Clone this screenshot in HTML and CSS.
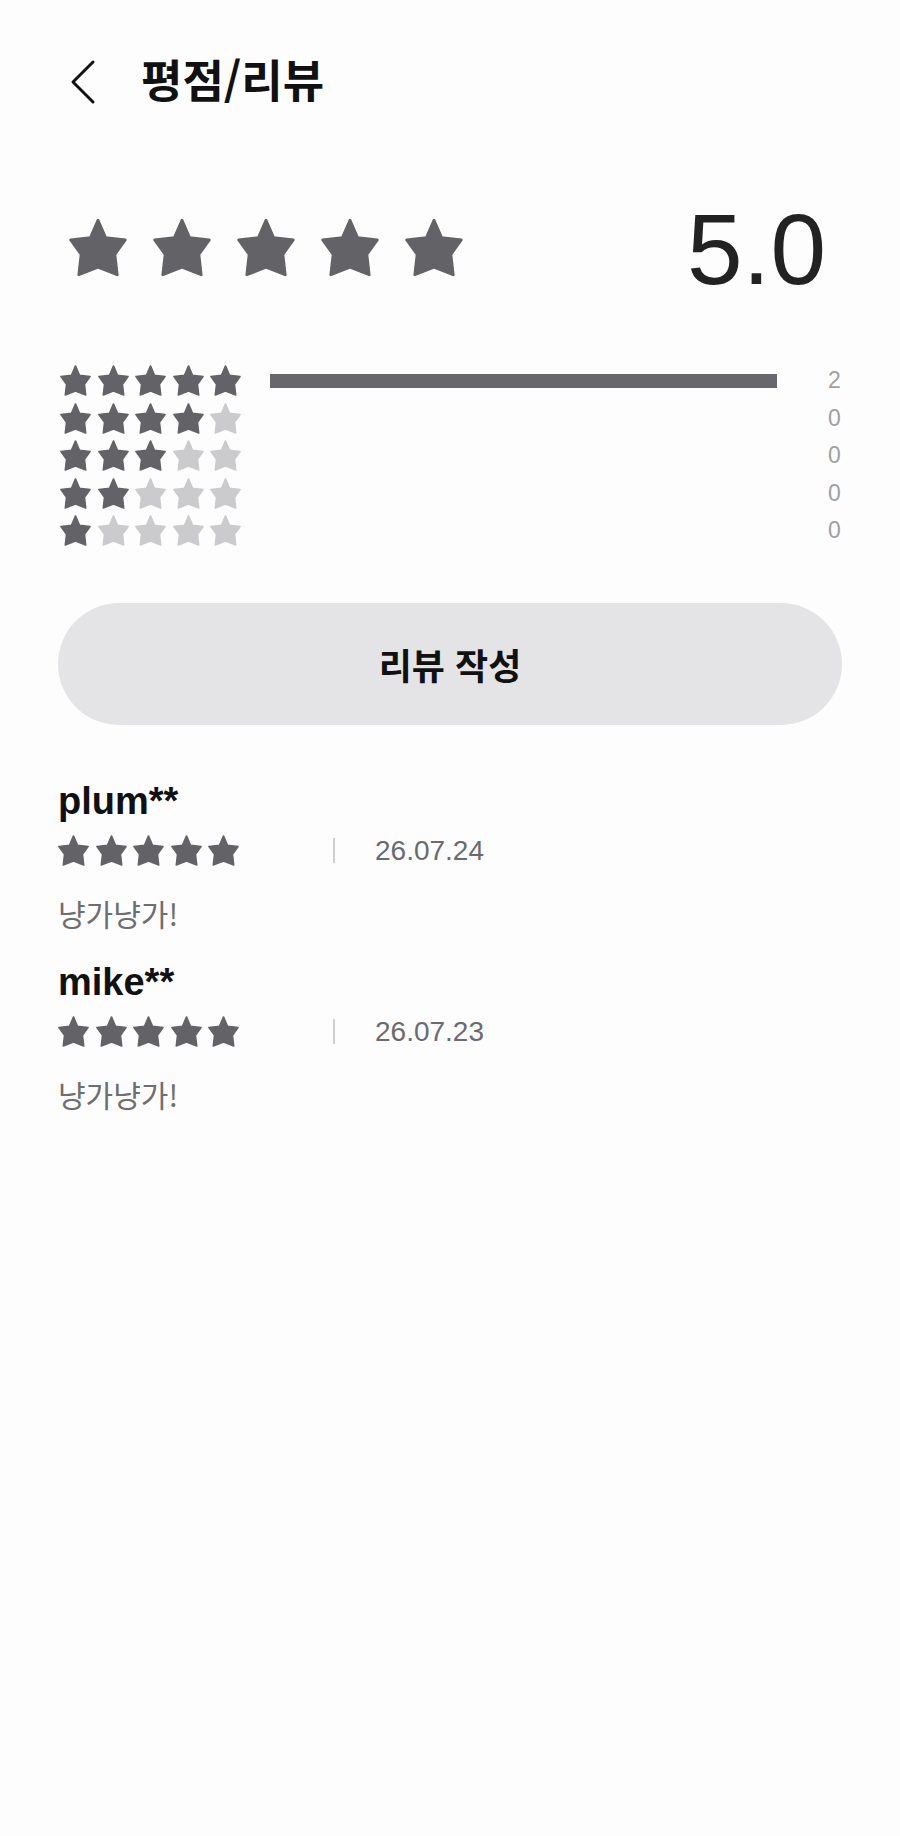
FILE: index.html
```html
<!DOCTYPE html>
<html lang="ko">
<head>
    <meta charset="utf-8">
    <meta name="viewport" content="width=device-width, minimum-scale=1.0, maximum-scale=1.0, user-scalable=no"/>
    <title>평점/리뷰</title>
    <link rel="stylesheet" href="styles.css">
</head>
<body>
<svg class="defs" width="0" height="0">
    <symbol id="star" viewBox="0 0 100 100">
        <path d="M50 3 L63 33 L97 37 L79 62 L83 97 L50 84 L17 97 L21 62 L3 37 L37 33 Z"
              fill="currentColor" stroke="currentColor" stroke-width="5" stroke-linejoin="round"/>
    </symbol>
</svg>

<div class="header">
    <svg class="back" width="26" height="46" viewBox="0 0 26 46">
        <path d="M23 3 L3 23 L23 43" fill="none" stroke="#111" stroke-width="3" stroke-linecap="round" stroke-linejoin="round"/>
    </svg>
    <p class="title">평점/리뷰</p>
</div>

<div class="summary">
    <div class="big-stars">
        <svg class="star on"><use href="#star"/></svg>
        <svg class="star on"><use href="#star"/></svg>
        <svg class="star on"><use href="#star"/></svg>
        <svg class="star on"><use href="#star"/></svg>
        <svg class="star on"><use href="#star"/></svg>
    </div>
    <div class="score">5.0</div>
</div>

<div class="dist">
    <div class="dist-row">
        <div class="stars">
            <svg class="star on"><use href="#star"/></svg>
            <svg class="star on"><use href="#star"/></svg>
            <svg class="star on"><use href="#star"/></svg>
            <svg class="star on"><use href="#star"/></svg>
            <svg class="star on"><use href="#star"/></svg>
        </div>
        <div class="track"><div class="fill" style="width: 100%"></div></div>
        <div class="count">2</div>
    </div>
    <div class="dist-row">
        <div class="stars">
            <svg class="star on"><use href="#star"/></svg>
            <svg class="star on"><use href="#star"/></svg>
            <svg class="star on"><use href="#star"/></svg>
            <svg class="star on"><use href="#star"/></svg>
            <svg class="star"><use href="#star"/></svg>
        </div>
        <div class="track"><div class="fill" style="width: 0%"></div></div>
        <div class="count">0</div>
    </div>
    <div class="dist-row">
        <div class="stars">
            <svg class="star on"><use href="#star"/></svg>
            <svg class="star on"><use href="#star"/></svg>
            <svg class="star on"><use href="#star"/></svg>
            <svg class="star"><use href="#star"/></svg>
            <svg class="star"><use href="#star"/></svg>
        </div>
        <div class="track"><div class="fill" style="width: 0%"></div></div>
        <div class="count">0</div>
    </div>
    <div class="dist-row">
        <div class="stars">
            <svg class="star on"><use href="#star"/></svg>
            <svg class="star on"><use href="#star"/></svg>
            <svg class="star"><use href="#star"/></svg>
            <svg class="star"><use href="#star"/></svg>
            <svg class="star"><use href="#star"/></svg>
        </div>
        <div class="track"><div class="fill" style="width: 0%"></div></div>
        <div class="count">0</div>
    </div>
    <div class="dist-row">
        <div class="stars">
            <svg class="star on"><use href="#star"/></svg>
            <svg class="star"><use href="#star"/></svg>
            <svg class="star"><use href="#star"/></svg>
            <svg class="star"><use href="#star"/></svg>
            <svg class="star"><use href="#star"/></svg>
        </div>
        <div class="track"><div class="fill" style="width: 0%"></div></div>
        <div class="count">0</div>
    </div>
</div>

<div class="btn">리뷰 작성</div>

<div class="reviews">
    <div class="review">
        <p class="name">plum**</p>
        <div class="meta">
            <div class="stars">
                <svg class="star on"><use href="#star"/></svg>
                <svg class="star on"><use href="#star"/></svg>
                <svg class="star on"><use href="#star"/></svg>
                <svg class="star on"><use href="#star"/></svg>
                <svg class="star on"><use href="#star"/></svg>
            </div>
            <span class="sep"></span>
            <span class="date">26.07.24</span>
        </div>
        <p class="comment">냥가냥가!</p>
    </div>
    <div class="review">
        <p class="name">mike**</p>
        <div class="meta">
            <div class="stars">
                <svg class="star on"><use href="#star"/></svg>
                <svg class="star on"><use href="#star"/></svg>
                <svg class="star on"><use href="#star"/></svg>
                <svg class="star on"><use href="#star"/></svg>
                <svg class="star on"><use href="#star"/></svg>
            </div>
            <span class="sep"></span>
            <span class="date">26.07.23</span>
        </div>
        <p class="comment">냥가냥가!</p>
    </div>
</div>
</body>
</html>
```

FILE: styles.css
```css
* {
    padding: 0;
    margin: 0;
    box-sizing: border-box;
}

body {
    background-color: #fdfdfe;
    font-family: "Liberation Sans", "Noto Sans CJK KR", sans-serif;
    color: #111111;
}

.defs {
    position: absolute;
    width: 0;
    height: 0;
}

.star {
    display: block;
    color: #cbcbce;
}

.star.on {
    color: #636367;
}

/* header */
.header {
    height: 164px;
    display: flex;
    align-items: center;
    padding-left: 70px;
}

.back {
    display: block;
}

.title {
    margin-left: 45px;
    margin-bottom: 8px;
    font-family: "Noto Sans CJK KR", sans-serif;
    font-size: 45px;
    font-weight: 700;
    line-height: 1;
}

/* summary */
.summary {
    height: 166px;
    display: flex;
    align-items: center;
    justify-content: space-between;
    padding: 0 74px 0 69px;
}

.big-stars {
    display: flex;
    gap: 26px;
}

.big-stars .star {
    width: 58px;
    height: 59px;
}

.score {
    font-size: 100px;
    line-height: 1;
    color: #222222;
    margin-top: 4px;
}

/* distribution */
.dist {
    padding: 35px 0 0 60px;
    display: flex;
    flex-direction: column;
    gap: 6.5px;
}

.dist-row {
    display: flex;
    align-items: center;
    height: 31px;
}

.stars {
    display: flex;
    gap: 6.5px;
}

.stars .star {
    width: 31px;
    height: 31px;
}

.track {
    margin-left: 29px;
    width: 507px;
    height: 14px;
}

.fill {
    height: 100%;
    background-color: #68686c;
}

.count {
    margin-left: 51px;
    font-size: 23px;
    color: #a0a0a2;
}

/* button */
.btn {
    margin: 57px 58px 0;
    height: 122px;
    border-radius: 61px;
    background-color: #e4e4e6;
    display: flex;
    align-items: center;
    justify-content: center;
    font-family: "Noto Sans CJK KR", sans-serif;
    font-size: 36px;
    font-weight: 700;
    color: #111111;
}

/* reviews */
.reviews {
    padding: 53px 58px 0;
}

.review {
    margin-bottom: 28px;
}

.name {
    font-size: 38px;
    font-weight: 700;
    line-height: 46px;
}

.meta {
    margin-top: 11px;
    display: flex;
    align-items: center;
    height: 31px;
}

.sep {
    margin-left: 94px;
    width: 2px;
    height: 25px;
    background-color: #cfcfd1;
}

.date {
    margin-left: 40px;
    font-size: 28px;
    color: #6b6b6e;
}

.comment {
    margin-top: 29px;
    font-family: "Noto Sans CJK KR", sans-serif;
    font-size: 30px;
    line-height: 36px;
    color: #6e6e70;
}
```
